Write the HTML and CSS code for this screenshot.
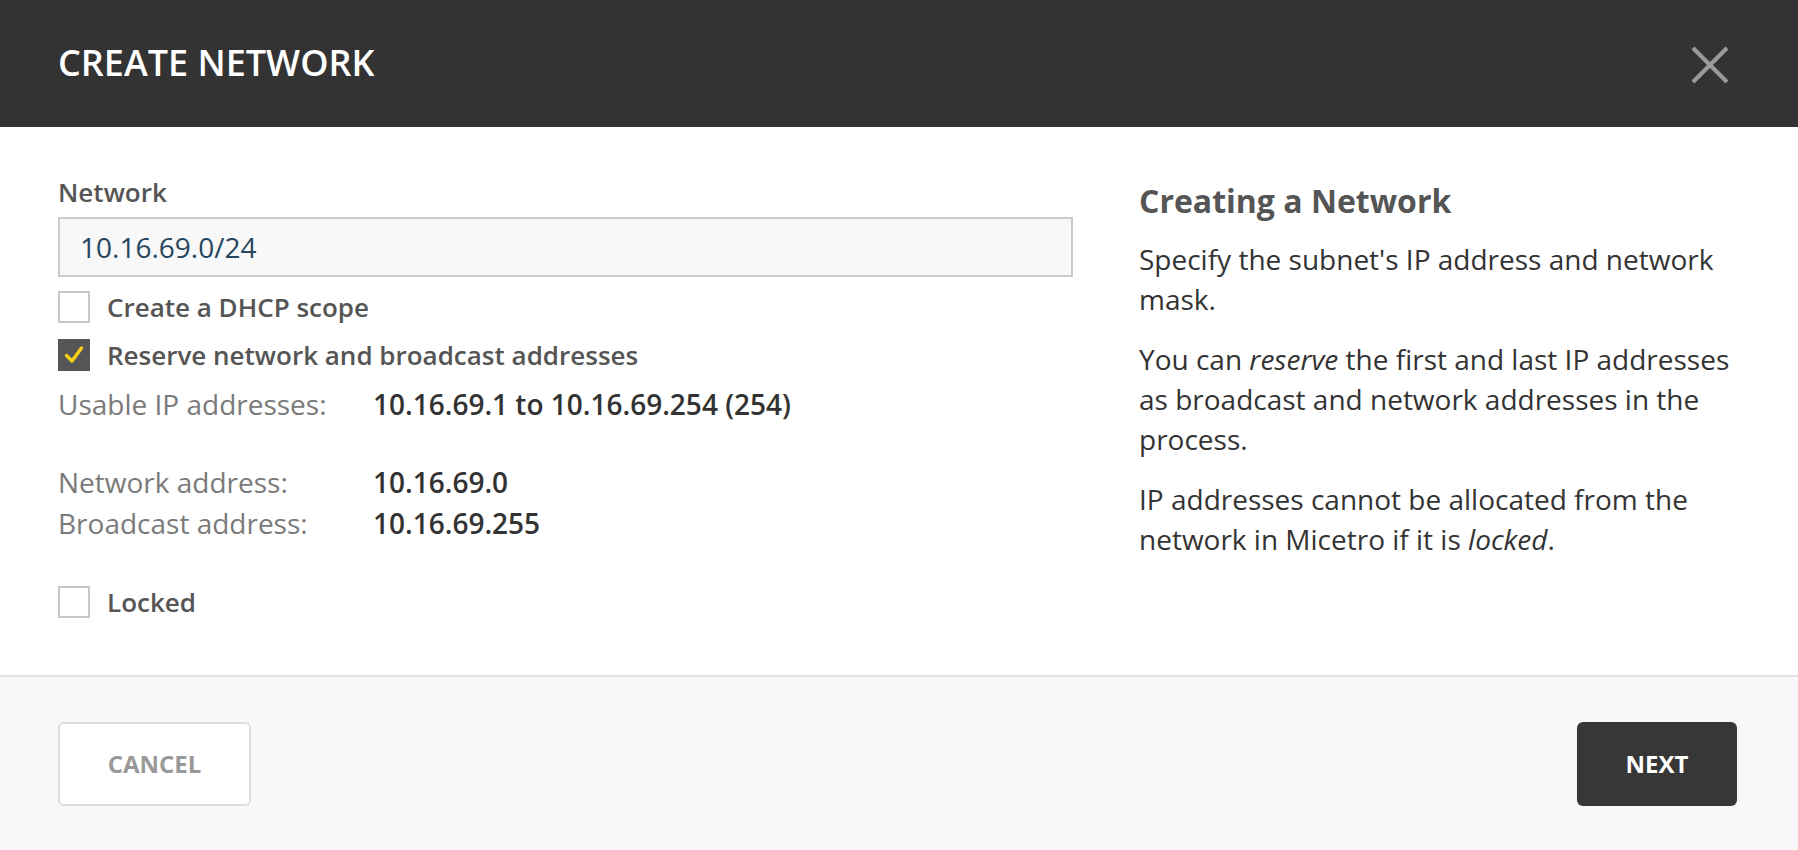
FILE: index.html
```html
<!DOCTYPE html>
<html lang="en">
<head>
<meta charset="utf-8">
<title>Create Network</title>
<link rel="stylesheet" href="styles.css">
</head>
<body>
<div class="dialog">
  <header class="dlg-header">
    <h1 class="dlg-title">CREATE NETWORK</h1>
    <button class="close-btn" aria-label="Close">
      <svg width="38" height="38" viewBox="0 0 38 38"><path d="M2 2 L36 36 M36 2 L2 36" stroke="#9a9a9a" stroke-width="4.2" fill="none"/></svg>
    </button>
  </header>
  <main class="dlg-body">
    <section class="form-col">
      <label class="field-label">Network</label>
      <div class="text-input">10.16.69.0/24</div>
      <div class="check-row">
        <span class="checkbox"></span>
        <span class="check-label">Create a DHCP scope</span>
      </div>
      <div class="check-row">
        <span class="checkbox checked">
          <svg width="28" height="28" viewBox="0 0 28 28"><path d="M6.5 14.5 L12 20 L21.5 7" stroke="#f7d117" stroke-width="3.4" stroke-linecap="round" stroke-linejoin="round" fill="none"/></svg>
        </span>
        <span class="check-label">Reserve network and broadcast addresses</span>
      </div>
      <div class="info-grid">
        <span class="info-label">Usable IP addresses:</span>
        <span class="info-value">10.16.69.1 to 10.16.69.254 (254)</span>
      </div>
      <div class="info-grid second">
        <span class="info-label">Network address:</span>
        <span class="info-value">10.16.69.0</span>
        <span class="info-label">Broadcast address:</span>
        <span class="info-value">10.16.69.255</span>
      </div>
      <div class="check-row locked">
        <span class="checkbox"></span>
        <span class="check-label">Locked</span>
      </div>
    </section>
    <aside class="help-col">
      <h2 class="help-title">Creating a Network</h2>
      <p>Specify the subnet's IP address and network mask.</p>
      <p>You can <em>reserve</em> the first and last IP addresses as broadcast and network addresses in the process.</p>
      <p>IP addresses cannot be allocated from the network in Micetro if it is <em>locked</em>.</p>
    </aside>
  </main>
  <footer class="dlg-footer">
    <button class="btn btn-cancel">CANCEL</button>
    <button class="btn btn-next">NEXT</button>
  </footer>
</div>
</body>
</html>
```

FILE: styles.css
```css
* { box-sizing: border-box; }
html, body {
  margin: 0;
  padding: 0;
  width: 1798px;
  height: 850px;
  overflow: hidden;
  font-family: "Open Sans", "Liberation Sans", sans-serif;
  background: #ffffff;
}
.dialog {
  display: flex;
  flex-direction: column;
  height: 850px;
}
.dlg-header {
  height: 127px;
  background: #333333;
  display: flex;
  align-items: center;
  justify-content: space-between;
  padding: 0 69px 0 58px;
  flex: none;
}
.dlg-title {
  margin: 0;
  color: #ffffff;
  font-size: 36px;
  font-weight: 600;
  padding-bottom: 2px;
}
.close-btn {
  background: none;
  border: none;
  padding: 0;
  width: 38px;
  height: 38px;
  display: flex;
  margin-top: 2px;
}
.dlg-body {
  flex: none;
  height: 550px;
  display: flex;
  gap: 66px;
  padding: 45px 58px 0 58px;
  border-bottom: 2px solid #e2e2e2;
}
.form-col {
  width: 1015px;
  flex: none;
  display: flex;
  flex-direction: column;
}
.field-label {
  font-size: 26px;
  font-weight: 600;
  color: #555555;
  line-height: 40px;
  height: 40px;
  margin-bottom: 5px;
}
.text-input {
  height: 60px;
  border: 2px solid #cbcbcb;
  background: #f8f8f8;
  padding: 0 20px;
  font-size: 28px;
  line-height: 56px;
  color: #25465e;
  margin-bottom: 14px;
}
.check-row {
  display: flex;
  align-items: center;
  gap: 17px;
  height: 32px;
  margin-bottom: 16px;
}
.checkbox {
  width: 32px;
  height: 32px;
  border: 2px solid #c8c8c8;
  background: #ffffff;
  display: flex;
  align-items: center;
  justify-content: center;
  flex: none;
}
.checkbox.checked {
  background: #555555;
  border-color: #555555;
}
.check-label {
  font-size: 26px;
  font-weight: 600;
  color: #555555;
}
.info-grid {
  display: grid;
  grid-template-columns: 315px auto;
  grid-auto-rows: 41px;
  align-items: center;
  font-size: 28px;
  margin-top: -4px;
}
.info-grid.second {
  margin-top: 37px;
}
.info-label {
  color: #7a7a7a;
}
.info-value {
  color: #333333;
  font-weight: 600;
}
.check-row.locked {
  margin-top: 43px;
}
.help-col {
  flex: 1;
  color: #333333;
  font-size: 28px;
  line-height: 40px;
}
.help-title {
  margin: 7px 0 16px 0;
  font-size: 32px;
  font-weight: 700;
  color: #555555;
  line-height: 44px;
}
.help-col p {
  margin: 0 0 20px 0;
}
.dlg-footer {
  flex: 1;
  background: #f8f8f8;
  display: flex;
  align-items: center;
  justify-content: space-between;
  padding: 0 61px 0 58px;
}
.btn {
  height: 84px;
  border-radius: 6px;
  font-family: "Open Sans", "Liberation Sans", sans-serif;
  font-size: 24px;
  font-weight: 700;
  cursor: pointer;
}
.btn-cancel {
  width: 193px;
  background: #ffffff;
  border: 2px solid #dddddd;
  color: #999999;
}
.btn-next {
  width: 160px;
  background: #373737;
  border: none;
  color: #ffffff;
}
```
